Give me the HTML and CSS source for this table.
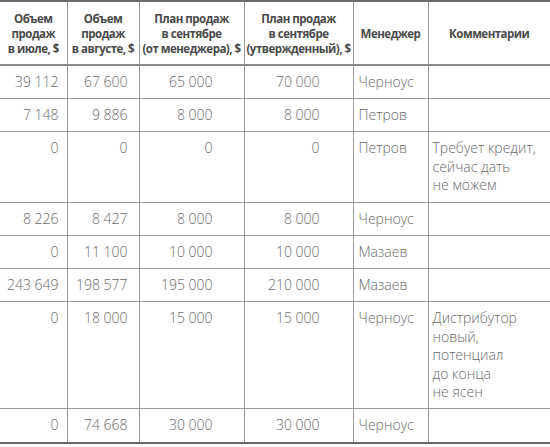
FILE: index.html
```html
<!DOCTYPE html>
<html lang="ru">
<head>
<meta charset="utf-8">
<link rel="stylesheet" href="styles.css">
</head>
<body>
<table class="sales">
  <colgroup>
    <col class="c1"><col class="c2"><col class="c3"><col class="c4"><col class="c5"><col class="c6">
  </colgroup>
  <thead>
    <tr>
      <th>Объем<br>продаж<br>в июле, $</th>
      <th>Объем<br>продаж<br>в августе, $</th>
      <th>План продаж<br>в сентябре<br>(от менеджера), $</th>
      <th>План продаж<br>в сентябре<br>(утвержденный), $</th>
      <th>Менеджер</th>
      <th>Комментарии</th>
    </tr>
  </thead>
  <tbody>
    <tr><td class="n1">39 112</td><td class="n2">67 600</td><td class="n3">65 000</td><td class="n4">70 000</td><td class="m">Черноус</td><td class="cm"></td></tr>
    <tr><td class="n1">7 148</td><td class="n2">9 886</td><td class="n3">8 000</td><td class="n4">8 000</td><td class="m">Петров</td><td class="cm"></td></tr>
    <tr><td class="n1">0</td><td class="n2">0</td><td class="n3">0</td><td class="n4">0</td><td class="m">Петров</td><td class="cm">Требует кредит,<br>сейчас дать<br>не можем</td></tr>
    <tr><td class="n1">8 226</td><td class="n2">8 427</td><td class="n3">8 000</td><td class="n4">8 000</td><td class="m">Черноус</td><td class="cm"></td></tr>
    <tr><td class="n1">0</td><td class="n2">11 100</td><td class="n3">10 000</td><td class="n4">10 000</td><td class="m">Мазаев</td><td class="cm"></td></tr>
    <tr><td class="n1">243 649</td><td class="n2">198 577</td><td class="n3">195 000</td><td class="n4">210 000</td><td class="m">Мазаев</td><td class="cm"></td></tr>
    <tr><td class="n1">0</td><td class="n2">18 000</td><td class="n3">15 000</td><td class="n4">15 000</td><td class="m">Черноус</td><td class="cm">Дистрибутор<br>новый,<br>потенциал<br>до конца<br>не ясен</td></tr>
    <tr><td class="n1">0</td><td class="n2">74 668</td><td class="n3">30 000</td><td class="n4">30 000</td><td class="m">Черноус</td><td class="cm"></td></tr>
  </tbody>
</table>
</body>
</html>
```

FILE: styles.css
```css
html, body {
  margin: 0;
  padding: 0;
  background: #ffffff;
}

.sales {
  width: 550px;
  border-collapse: collapse;
  table-layout: fixed;
  border-top: 2px solid #6a6a6a;
  border-bottom: 2px solid #6a6a6a;
}

.c1 { width: 67px; }
.c2 { width: 72px; }
.c3 { width: 105px; }
.c4 { width: 109px; }
.c5 { width: 75px; }
.c6 { width: 122px; }

.sales th {
  font-family: "Open Sans", "Liberation Sans", sans-serif;
  font-weight: 700;
  font-size: 11.5px;
  line-height: 15px;
  letter-spacing: -0.5px;
  color: #4a4a4a;
  text-align: center;
  vertical-align: middle;
  padding: 0;
  height: 64px;
  border-left: 1px solid #9a9a9a;
  border-bottom: 2px solid #8a8a8a;
  box-sizing: border-box;
}

.sales td {
  font-family: "Open Sans", "Liberation Sans", sans-serif;
  font-weight: 300;
  font-size: 14px;
  line-height: 18.5px;
  color: #6a6a6a;
  vertical-align: top;
  padding: 7px 0 6.7px 0;
  border-left: 1px solid #9a9a9a;
  border-top: 1px solid #9a9a9a;
}

.sales th:first-child,
.sales td:first-child {
  border-left: none;
}

.n1 { text-align: right; padding-right: 8px !important; }
.n2 { text-align: right; padding-right: 11px !important; }
.n3 { text-align: right; padding-right: 31px !important; }
.n4 { text-align: right; padding-right: 33px !important; }
.m { text-align: left; padding-left: 5px !important; }
.cm { text-align: left; padding-left: 4px !important; }
```
